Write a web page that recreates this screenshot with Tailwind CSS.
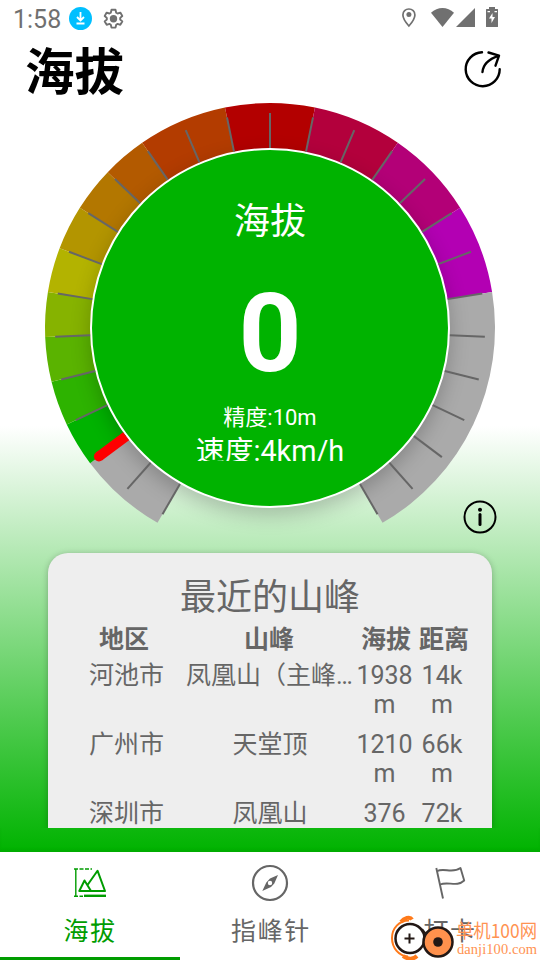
<!DOCTYPE html>
<html lang="zh-CN">
  <head>
    <meta charset="UTF-8" />
    <meta name="viewport" content="width=device-width, initial-scale=1" />
    <title>海拔</title>
    <script src="https://cdn.jsdelivr.net/npm/@tailwindcss/browser@4"></script>
  </head>
  <body
    class="relative flex h-[960px] w-[540px] flex-col overflow-hidden bg-white font-[Roboto,'Noto_Sans_CJK_SC',sans-serif] text-[#666]"
  >
    <div
      class="flex h-[852px] flex-col bg-[linear-gradient(to_bottom,#fff_50%,#00b300_100%)]"
    >
      <!-- status bar -->
      <div class="flex h-9 items-center justify-between pl-[13px]">
        <div class="flex h-full items-center">
          <span class="w-14 pt-1 text-[25px] leading-8 text-[#707070]">1:58</span>
          <svg class="h-6 w-6" viewBox="0 0 24 24" fill="none">
            <circle cx="11.5" cy="12.5" r="11.5" fill="#00bfff" />
            <path d="M11.5 6v8M8 11l3.5 3.5L15 11M7.5 17.5h8" stroke="#fff" stroke-width="1.8" />
          </svg>
          <svg class="ml-2 h-6 w-6" viewBox="0 0 24 24" fill="none" stroke="#707070">
            <path
              d="M10.5 3.8h4l.7 2.9 1.4.8 2.7-.9 2 3.4-2.1 1.9v1.6l2.1 1.9-2 3.4-2.7-.9-1.4.8-.7 2.9h-4l-.7-2.9-1.4-.8-2.7.9-2-3.4 2.1-1.9v-1.6L3.7 10l2-3.4 2.7.9 1.4-.8z"
              stroke-width="1.9"
              stroke-linejoin="round"
            />
            <circle cx="12.5" cy="12.7" r="3.7" fill="#707070" stroke="none" />
          </svg>
        </div>
        <svg class="h-9 w-[140px]" viewBox="400 0 140 36" fill="#707070">
          <path
            d="M408.9 9c-3.400 0-6 2.600-6 5.900 0 4.200 6 11.100 6 11.100s6-6.900 6-11.100c0-3.300-2.600-5.900-6-5.900z"
            fill="none"
            stroke="#707070"
            stroke-width="1.7"
          />
          <circle cx="408.9" cy="14.5" r="2.5" />
          <path d="M431 12.800c6.500-6.300 16.500-6.300 23 0L442.500 27z" />
          <path d="M475 8v19h-19z" />
          <path d="M489 7h6v2h2.500q.5 0 .5.600v16.800q0 .6-.6.600h-10.800q-.6 0-.6-.6V9.600q0-.6.600-.6h2.400z" />
          <path d="M492.500 13l-3.500 5.500h2.500v4.500l3.500-6h-2.500zM487.500 11h2.500v1.200h-2.500zM494.500 11h2.500v1.200h-2.500z" fill="#fff" />
        </svg>
      </div>

      <!-- title -->
      <div class="flex h-[66px] items-center justify-between pr-[37px] pl-[25px]">
        <h1 class="pt-2 text-[49.5px] leading-[66px] font-bold text-black">海拔</h1>
        <svg
          class="h-10 w-10"
          viewBox="463 49 40 40"
          fill="none"
          stroke="#000"
          stroke-width="2.4"
          stroke-linecap="round"
          stroke-linejoin="round"
        >
          <path d="M482 52.200a17 17 0 1 0 17.700 17" />
          <path d="M482.500 72c.5-7.500 6.500-13 16-16.200M488.500 52.500l10.500 3.200-3.500 10" />
        </svg>
      </div>

      <!-- altitude gauge -->
      <div class="grid h-[451px] grid-cols-1 grid-rows-1">
        <svg class="col-start-1 row-start-1 h-[451px] w-[540px]" viewBox="0 102 540 451">
          <g id="bands"></g>
        </svg>
        <div
          class="col-start-1 row-start-1 mt-[46px] flex h-90 w-90 flex-col items-center justify-self-center rounded-full border-2 border-white bg-[#00b300] text-white shadow-[0_7px_20px_rgba(0,0,0,0.22)]"
        >
          <div class="mt-[45px] text-[36px] leading-[54px]">海拔</div>
          <div class="mt-[21px] text-[110px] leading-[128px] font-bold">0</div>
          <div class="mt-1 text-[22px] leading-[32px]">精度:10m</div>
          <div class="h-[27px] overflow-hidden text-[28.8px] leading-[35px]">速度:4km/h</div>
        </div>
        <svg class="col-start-1 row-start-1 h-[451px] w-[540px]" viewBox="0 102 540 451">
          <g id="ticks"></g>
          <g fill="none" stroke="#000" stroke-width="2">
            <circle cx="480" cy="517" r="15.5" />
            <path d="M480 514.500v10" stroke-width="3" stroke-linecap="round" />
            <circle cx="480" cy="509.700" r="2" fill="#000" stroke="none" />
          </g>
        </svg>
      </div>

      <!-- nearest peaks -->
      <div class="h-[275px] px-12 [clip-path:inset(-10px_0_0_0)]">
        <div class="h-[275px] overflow-hidden rounded-t-[20px] bg-[#eee] pt-[19px] shadow-[0_1px_6px_rgba(0,0,0,0.25)]">
          <h2 class="text-center text-[36px] leading-[52px]">最近的山峰</h2>
          <div
            class="grid grid-cols-[152px_138px_96px_20px] justify-start text-center text-[25px] leading-[32px] font-bold whitespace-nowrap"
          >
            <span>地区</span><span>山峰</span><span>海拔</span><span class="flex justify-center">距离</span>
          </div>
          <div
            id="peaks"
            class="mt-[5px] grid grid-cols-[110px_174px_56px_60px] justify-start gap-y-[11px] pl-6 text-center text-[25px] leading-[29px]"
          ></div>
        </div>
      </div>
      <div class="grow shadow-[inset_0_-3px_3px_rgba(0,0,0,0.04)]"></div>
    </div>

    <!-- tabs -->
    <nav class="grid h-[108px] grid-cols-3 bg-white text-[25px] tracking-[1.6px]">
      <div class="flex flex-col items-center border-b-3 border-[#009c00] pt-3 text-[#009c00]">
        <svg class="h-[38px] w-10" viewBox="70 864 40 38" fill="none" stroke="currentColor">
          <path d="M75.800 869v27" stroke-width="1.4" />
          <path d="M74 869h18" stroke-width="1.4" stroke-dasharray="4 1.5" />
          <path d="M74 896.300h9" stroke-width="1.4" stroke-dasharray="4 1.5" />
          <path d="M84 895.800h22" stroke-width="2.4" />
          <path d="M87.500 885l10-14.300 7.500 20.300H79.300l5.200-10.500 6.500 10.500" stroke-width="2" stroke-linejoin="round" />
        </svg>
        <span class="mt-3 leading-[36px]">海拔</span>
      </div>
      <div class="flex flex-col items-center pt-3">
        <svg class="h-[38px] w-10" viewBox="250 864 40 38">
          <circle cx="270" cy="883" r="17" fill="none" stroke="#666" stroke-width="2.2" />
          <path
            d="M278 875l-3.700 8.500-3.300 3.500-8.700 4 4-8.500 3.700-4zM270 880.800a2.200 2.200 0 1 0 0 4.400 2.200 2.200 0 1 0 0-4.400z"
            fill="#666"
            fill-rule="evenodd"
          />
        </svg>
        <span class="mt-3 pl-0.5 leading-[36px]">指峰针</span>
      </div>
      <div class="flex flex-col items-center pt-3">
        <svg class="h-[38px] w-10" viewBox="430 864 40 38" fill="none" stroke="#666" stroke-width="1.9">
          <path d="M436.300 868l6.700 30.500" />
          <path d="M437 871.200c7-4 15 3 23.500-3.200l3.700 12.500c-7.500 7-16 .5-24.200 4" stroke-linejoin="round" />
        </svg>
        <span class="mt-3 leading-[36px]">打卡</span>
      </div>
    </nav>

    <!-- site badge -->
    <svg class="absolute right-0 bottom-0 h-[45px] w-[150px]" viewBox="390 915 150 45">
      <path d="M409 920.500c-10 0-17 8-17 17.500 0 10 7 18 16 18.500" fill="none" stroke="#ff7a1a" stroke-width="2" />
      <path d="M401 922c3-4 9-6 11-2.500M403 956c4 3 10 4 14 0" fill="none" stroke="#ff7a1a" stroke-width="4" />
      <circle cx="410" cy="938.500" r="14.500" fill="#fff" stroke="#231815" stroke-width="2.5" />
      <path d="M409.500 933.500v10M404.500 938.500h10" stroke="#231815" stroke-width="2" />
      <path d="M422 929l4 5" stroke="#231815" stroke-width="2" />
      <circle cx="438" cy="942" r="14.500" fill="#ff914d" stroke="#231815" stroke-width="2.5" />
      <circle cx="438" cy="942" r="4.800" fill="#231815" />
      <g fill="#ff9352">
        <text x="456" y="937.500" font-size="19" textLength="81" lengthAdjust="spacingAndGlyphs" font-family="Noto Sans CJK SC, sans-serif">单机100网</text>
        <text x="457" y="953.500" font-size="14.500" textLength="80" font-family="Liberation Serif, serif">danji100.com</text>
      </g>
    </svg>

    <script>
      const CX = 270;
      const CY = 328;
      const STEPS = 13;

      // step -13..13 covers -150deg..150deg, 0 is straight up
      function point(step, r) {
        const a = ((step / STEPS) * 150 * Math.PI) / 180;
        return [CX + r * Math.sin(a), CY - r * Math.cos(a)];
      }

      const bands = [
        [-13, -11, "#aaaaaa"],
        [-11, -10, "#00b300"],
        [-10, -9, "#2db300"],
        [-9, -8, "#5ab300"],
        [-8, -7, "#86b300"],
        [-7, -6, "#b3b300"],
        [-6, -5, "#b39500"],
        [-5, -4, "#b37700"],
        [-4, -3, "#b35a00"],
        [-3, -1, "#b33c00"],
        [-1, 1, "#b30000"],
        [1, 3, "#b3003c"],
        [3, 5, "#b30077"],
        [5, 7, "#b300b3"],
        [7, 13, "#aaaaaa"],
      ];
      document.getElementById("bands").innerHTML = bands
        .map(([from, to, color]) => {
          const p = [point(from, 225), point(to, 225), point(to, 170), point(from, 170)];
          return `<path d="M${p[0]}A225 225 0 0 1 ${p[1]}L${p[2]}A170 170 0 0 0 ${p[3]}z" fill="${color}" />`;
        })
        .join("");

      let ticks = "";
      for (let i = -STEPS; i <= STEPS; i++) {
        const needle = i === -11;
        ticks += `<path d="M${point(i, 180)}L${point(i, needle ? 214 : 215)}" stroke="${needle ? "#f00" : "#666"}" stroke-width="${needle ? 10 : 2}" />`;
        if (needle) {
          const [x, y] = point(i, 214);
          ticks += `<circle cx="${x}" cy="${y}" r="5" fill="#f00" />`;
        }
      }
      document.getElementById("ticks").innerHTML = ticks;

      const peaks = [
        ["河池市", "凤凰山（主峰）", "1938m", "14km"],
        ["广州市", "天堂顶", "1210m", "66km"],
        ["深圳市", "凤凰山", "376m", "72km"],
      ];
      document.getElementById("peaks").innerHTML = peaks
        .map(
          ([city, name, height, distance]) => `
            <span class="pr-[3px] pl-[2px]">${city}</span>
            <span class="truncate pr-[2px] pl-1">${name}</span>
            <span class="-mr-[1px] break-all">${height}</span>
            <span class="px-[6px] break-all">${distance}</span>
          `
        )
        .join("");
    </script>
  </body>
</html>
